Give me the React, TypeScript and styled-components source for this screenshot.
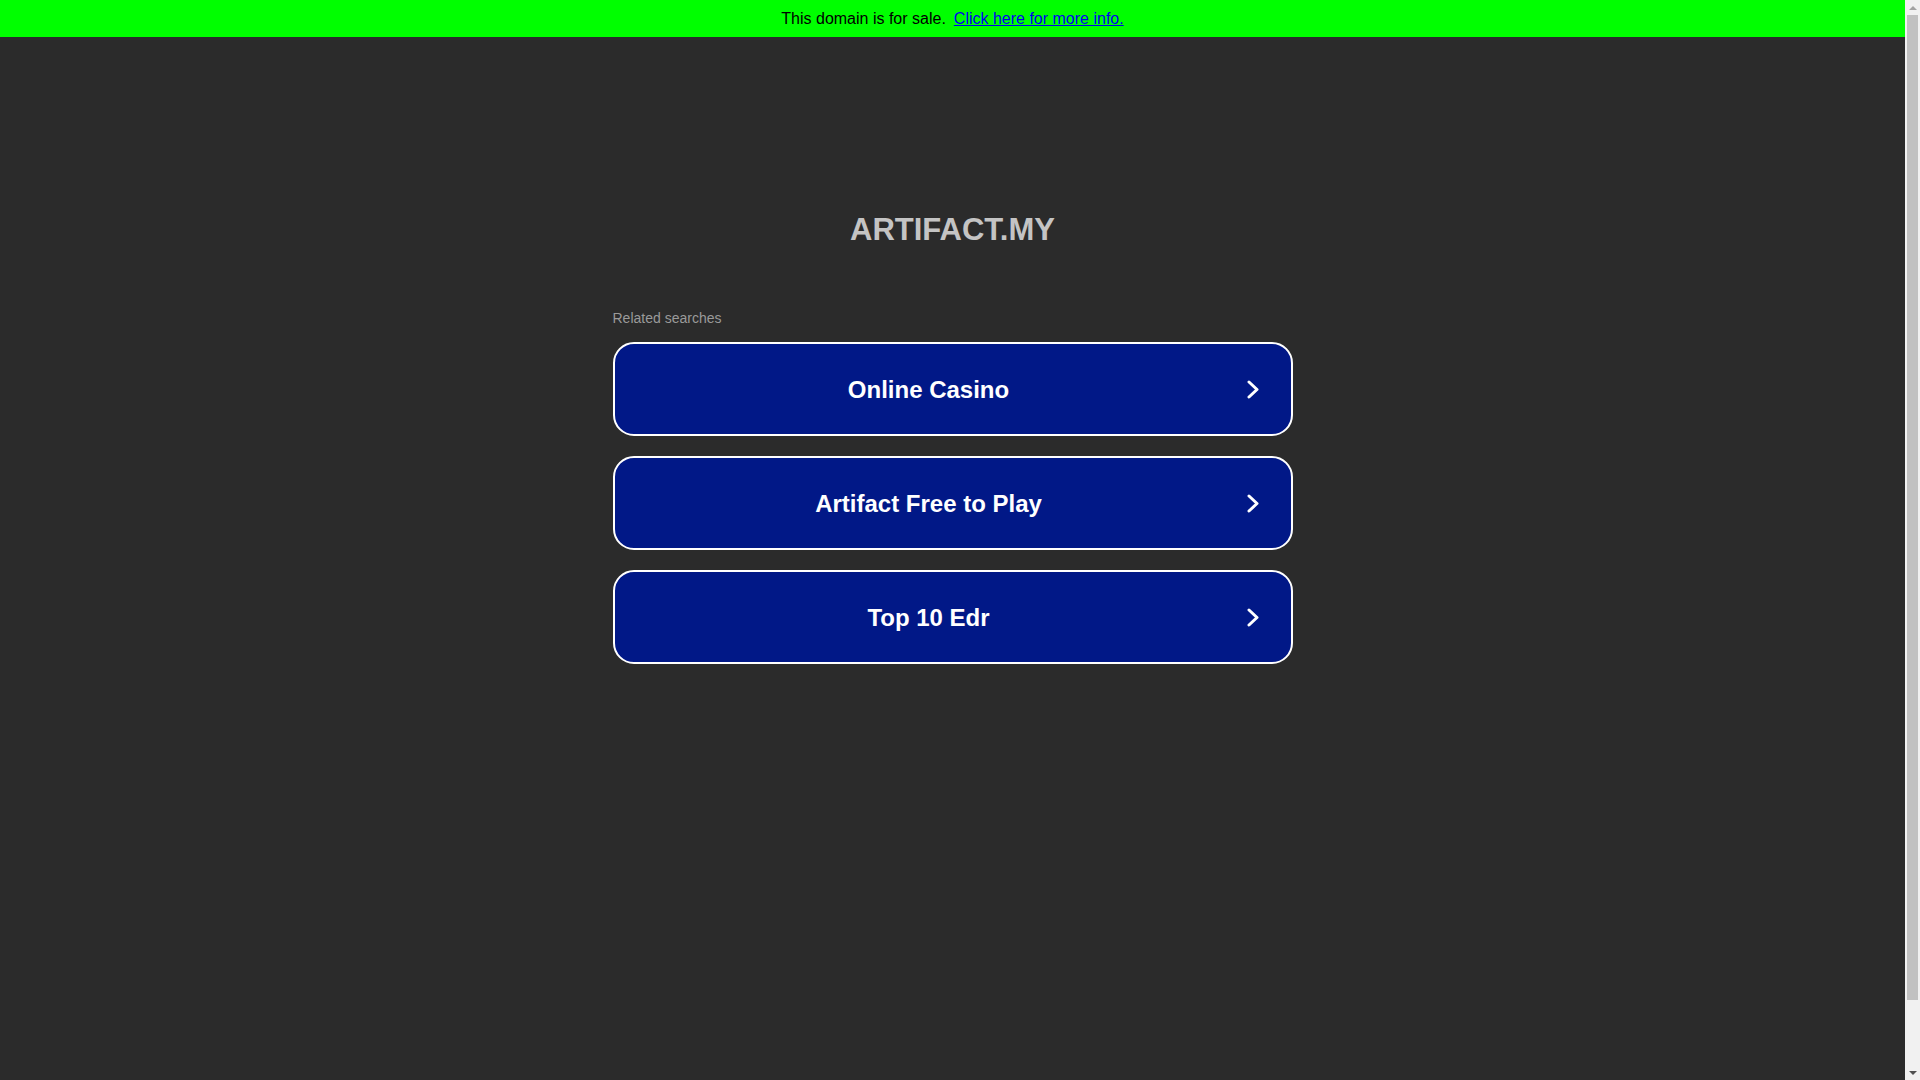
import React from "react";
import styled, { createGlobalStyle } from "styled-components";

const Global = createGlobalStyle`
  html, body {
    margin: 0;
    padding: 0;
    background: #2b2b2b;
    font-family: "Liberation Sans", Arial, sans-serif;
    overflow: hidden;
  }
`;

const Page = styled.div`
  height: 100vh;
  margin-right: 15px;
  display: flex;
  flex-direction: column;
`;

const Banner = styled.div`
  height: 37px;
  flex: none;
  background: #00ff00;
  display: flex;
  align-items: center;
  justify-content: center;
  font-size: 16px;
  color: #000;
  gap: 8px;
`;

const BannerLink = styled.a`
  color: #0000ee;
  text-decoration: underline;
  cursor: pointer;
`;

const Main = styled.main`
  width: 680px;
  margin: 0 auto;
  display: flex;
  flex-direction: column;
`;

const Title = styled.h1`
  margin: 175px 0 0;
  text-align: center;
  font-size: 31px;
  line-height: 36px;
  font-weight: 700;
  color: #c4c4c4;
`;

const Related = styled.div`
  margin-top: 62px;
  font-size: 14px;
  line-height: 16px;
  color: #9a9a9a;
`;

const List = styled.div`
  margin-top: 16px;
  display: flex;
  flex-direction: column;
  gap: 20px;
`;

const Card = styled.a`
  box-sizing: border-box;
  height: 94px;
  border: 2px solid #ffffff;
  border-radius: 21px;
  background: #011887;
  display: flex;
  align-items: center;
  padding: 2px 32px 0 0;
  text-decoration: none;
  cursor: pointer;
`;

const CardText = styled.span`
  flex: 1;
  text-align: center;
  font-size: 24px;
  font-weight: 700;
  color: #ffffff;
  margin-right: 4px;
`;

const ChevronSvg = styled.svg`
  flex: none;
  margin-bottom: 2px;
`;

const ScrollTrack = styled.div`
  position: fixed;
  top: 0;
  right: 0;
  width: 15px;
  height: 100vh;
  background: #f1f1f1;
  display: flex;
  flex-direction: column;
  align-items: center;
`;

const Arrow = styled.div<{ $down?: boolean; $color: string }>`
  height: 15px;
  flex: none;
  display: flex;
  align-items: center;
  justify-content: center;
  &::before {
    content: "";
    width: 0;
    height: 0;
    border-left: 4px solid transparent;
    border-right: 4px solid transparent;
    ${(p) =>
      p.$down
        ? `border-top: 4px solid ${p.$color};`
        : `border-bottom: 4px solid ${p.$color};`}
  }
`;

const Thumb = styled.div`
  width: 11px;
  height: 985px;
  flex: none;
  background: #c1c1c1;
`;

const Spacer = styled.div`
  flex: 1;
`;

const Chevron = () => (
  <ChevronSvg width="12" height="19" viewBox="0 0 12 19" fill="none">
    <polyline
      points="2,2 10,9.5 2,17"
      stroke="#ffffff"
      strokeWidth="3"
      strokeLinecap="round"
      strokeLinejoin="round"
    />
  </ChevronSvg>
);

const items = ["Online Casino", "Artifact Free to Play", "Top 10 Edr"];

export default function App() {
  return (
    <>
      <Global />
      <Page>
        <Banner>
          <span>This domain is for sale.</span>
          <BannerLink>Click here for more info.</BannerLink>
        </Banner>
        <Main>
          <Title>ARTIFACT.MY</Title>
          <Related>Related searches</Related>
          <List>
            {items.map((t) => (
              <Card key={t}>
                <CardText>{t}</CardText>
                <Chevron />
              </Card>
            ))}
          </List>
        </Main>
      </Page>
      <ScrollTrack aria-hidden>
        <Arrow $color="#a3a3a3" />
        <Thumb />
        <Spacer />
        <Arrow $down $color="#505050" />
      </ScrollTrack>
    </>
  );
}
